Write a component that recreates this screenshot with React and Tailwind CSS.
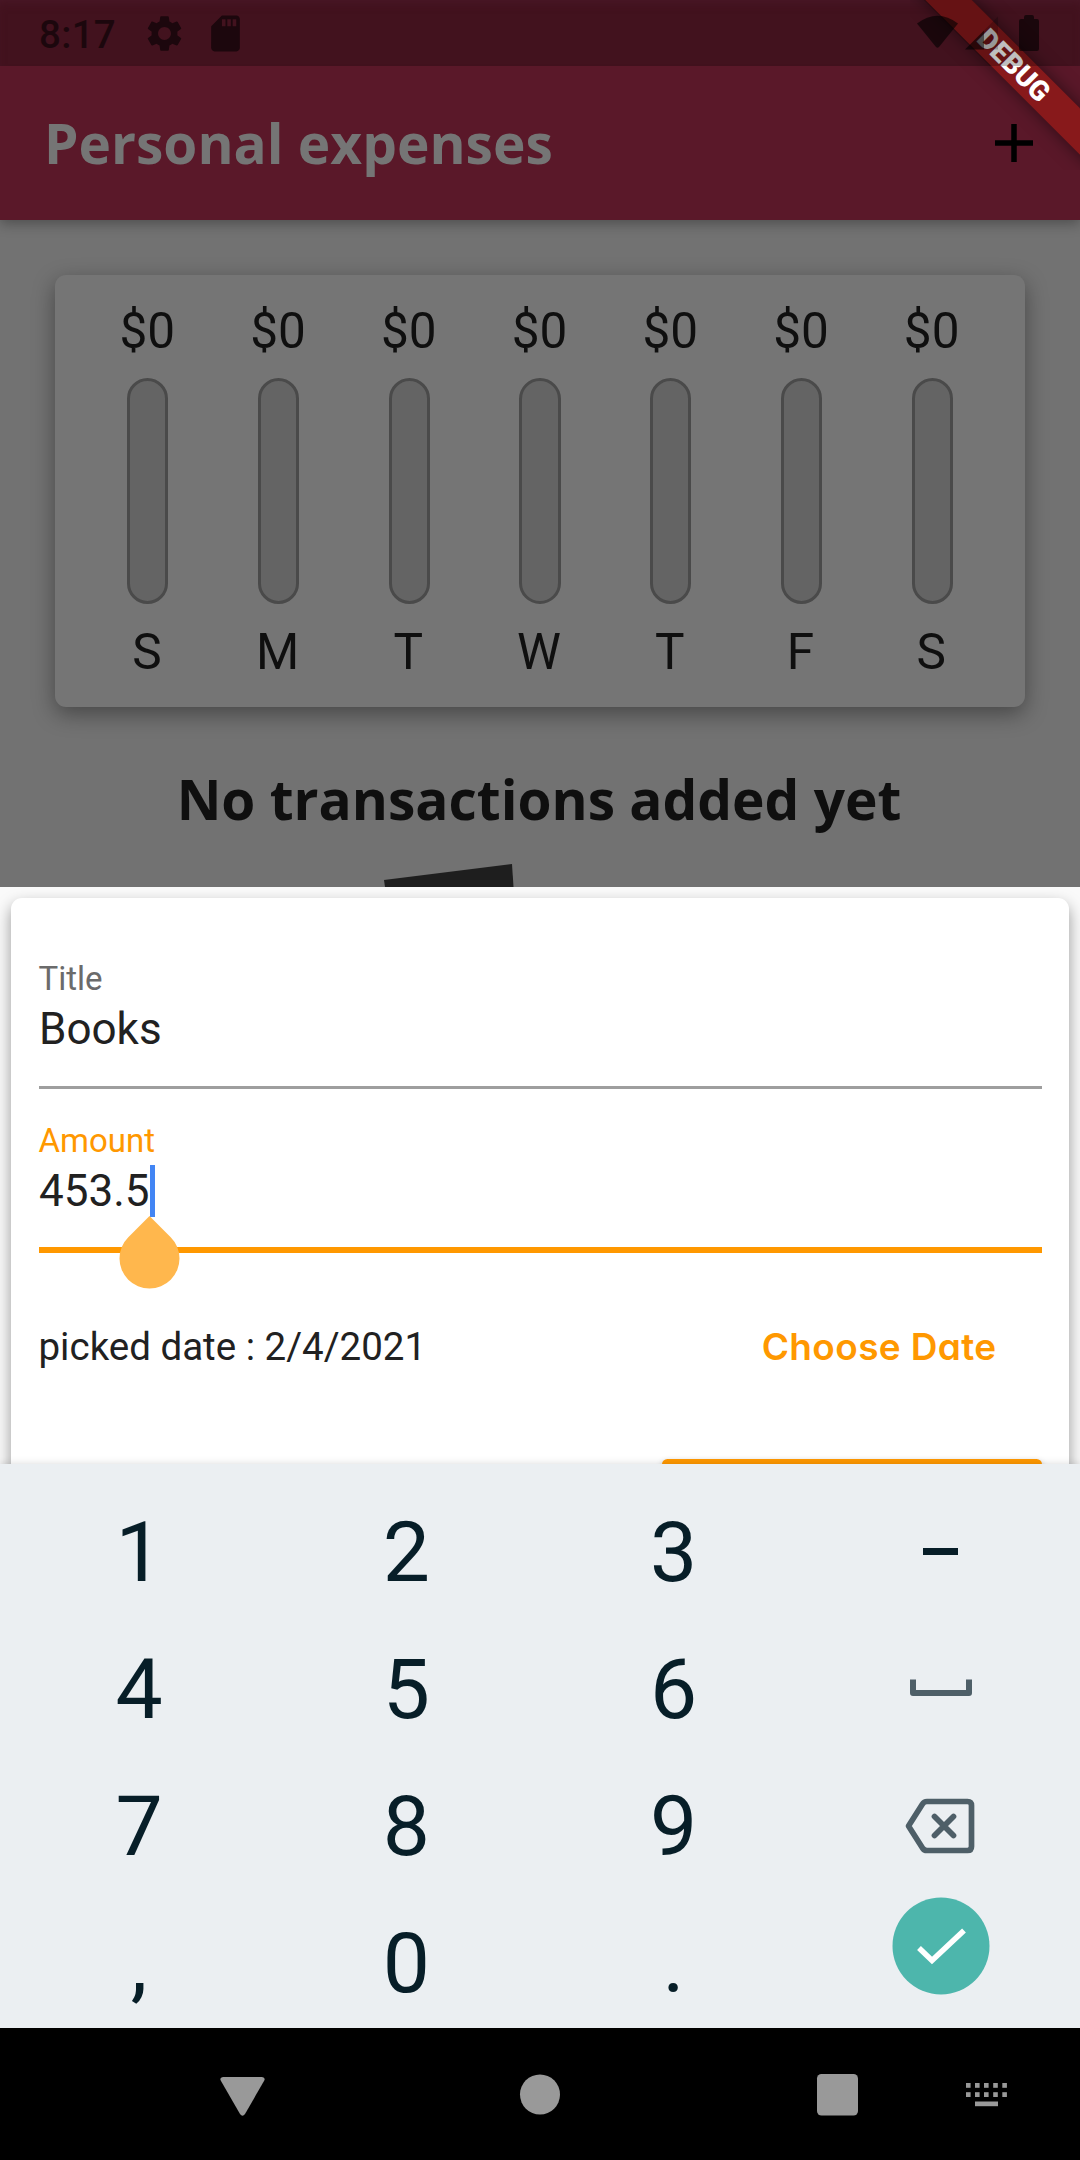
import React from 'react';
import { MdSettings, MdSdCard } from 'react-icons/md';

const DAYS = ['S', 'M', 'T', 'W', 'T', 'F', 'S'];

function StatusBar() {
  return (
    <div className="relative z-20 flex h-[66px] items-center bg-[#42121e] pl-[39px] shadow-[inset_0_6px_12px_-6px_#4c1a2a]">
      <span className="mt-[4px] w-[100px] text-[38.5px] font-medium leading-[48px] tracking-[0.3px] text-[#1c070d]">8:17</span>
      <MdSettings className="ml-[4px] size-[43px] text-[#1c070d]" />
      <MdSdCard className="ml-[18px] size-[43px] text-[#1c070d]" />
    </div>
  );
}

function StatusIndicators() {
  return (
    <svg className="absolute right-0 top-0 z-40" width="180" height="66" viewBox="900 0 180 66">
      <g fill="#000" fillOpacity="0.6">
        <path d="M917 23.5Q937.500 8 958 23.500L939 47Q937.500 48.500 936 47Z" />
        <path d="M965 49.500L984 30.500V49.500Z" />
        <path d="M1024 19V17Q1024 15 1026 15H1032Q1034 15 1034 17V19H1037Q1039 19 1039 21V49Q1039 51 1037 51H1021Q1019 51 1019 49V21Q1019 19 1021 19Z" />
      </g>
      <path d="M984 30.500L998 16.500V49.500H984Z" fill="#000" fillOpacity="0.2" />
    </svg>
  );
}

function DebugBanner() {
  return (
    <div className="pointer-events-none absolute right-0 top-0 z-30 size-[170px] overflow-hidden">
      <div className="absolute left-[-35px] top-[45px] flex h-[33px] w-[270px] rotate-45 items-center justify-center bg-[#88191b] shadow-[0_0_17px_rgba(0,0,0,0.5)]">
        <span className="ml-[11px] text-[28px] font-black leading-[33px] text-white">DEBUG</span>
      </div>
      <div className="absolute inset-x-0 top-0 h-[66px] bg-black/25 [clip-path:polygon(14px_0,62px_0,128px_66px,80px_66px)]" />
    </div>
  );
}

function AppBar() {
  return (
    <div className="relative z-10 flex h-[154px] items-center justify-between bg-[#5a1829] pl-[44px] pr-[46px] shadow-[0_4px_12px_rgba(0,0,0,0.3)]">
      <h1 className="mb-[2px] font-['Open_Sans'] text-[55px] font-bold leading-[75px] text-[#757575]">Personal expenses</h1>
      <svg width="40" height="40" viewBox="0 0 40 40">
        <path d="M20 1V39M1 20H39" stroke="#000" strokeWidth="5.5" />
      </svg>
    </div>
  );
}

function Chart() {
  return (
    <div className="mx-[55px] mt-[55px] flex h-[432px] rounded-[11px] bg-[#757575] px-[27.500px] pt-[27px] shadow-[0_7px_22px_rgba(0,0,0,0.38)]">
      {DAYS.map((day, i) => (
        <div key={i} className="flex flex-1 flex-col items-center text-[49.500px] leading-[58px] text-[#0f0f0f]">
          <span className="mr-px">$0</span>
          <div className="mb-[19px] mt-[18px] h-[226px] w-[41.250px] rounded-full border-[3px] border-[#4a4a4a] bg-[#646464]" />
          <span className="mr-[2px]">{day}</span>
        </div>
      ))}
    </div>
  );
}

function Field({ label, value, active }) {
  return (
    <div>
      <div className={active ? 'text-[33px] leading-[40px] text-[#ff9800]' : 'text-[33px] leading-[40px] text-[#6b6b6b]'}>{label}</div>
      <div className="mt-[4px] flex h-[52px] items-center pl-[0.500px] text-[44px] leading-[52px] text-[#212121]">
        <span>{value}</span>
        {active && (
          <span className="relative h-[52px] w-[5.500px] bg-[#4285f4]">
            <svg className="absolute left-[-31px] top-[51px]" width="61" height="73" viewBox="0 0 61 73">
              <path d="M30.500 0L51.700 21.200A30 30 0 1 1 9.300 21.200Z" fill="#ffb74d" />
            </svg>
          </span>
        )}
      </div>
      <div className={active ? 'mt-[30px] h-[5.500px] bg-[#ff9800]' : 'mt-[31px] h-[3px] bg-[#9e9e9e]'} />
    </div>
  );
}

function Sheet() {
  return (
    <div className="h-[577px] overflow-hidden bg-[#fafafa] px-[11px] pt-[11px]">
      <div className="h-[640px] rounded-[11px] bg-white px-[27.500px] pt-[61px] shadow-[0_7px_16px_rgba(0,0,0,0.4)]">
        <Field label="Title" value="Books" />
        <div className="h-[32px]" />
        <Field label="Amount" value="453.5" active />
        <div className="mt-[28px] flex h-[132px] items-center justify-between pr-[45px]">
          <span className="text-[38.500px] text-[#212121]">picked date : 2/4/2021</span>
          <span className="font-[Inter] text-[37px] font-semibold tracking-[0.350px] text-[#ff9800] [font-feature-settings:'cv11']">Choose Date</span>
        </div>
        <div className="ml-auto mt-[46px] h-[99px] w-[380px] rounded-[5.500px] bg-[#ff9800] shadow-[0_3px_6px_rgba(0,0,0,0.3)]" />
      </div>
    </div>
  );
}

function SpaceIcon() {
  return (
    <svg className="mb-[4px] ml-px" width="62" height="18" viewBox="0 0 62 18">
      <path d="M3 0.500V14H59V0.500" fill="none" stroke="#4e5f68" strokeWidth="6" strokeLinejoin="round" />
    </svg>
  );
}

function BackspaceIcon() {
  return (
    <svg className="mb-[3px] mr-[2px]" width="70" height="56" viewBox="0 0 70 56">
      <g fill="none" stroke="#4e5f68" strokeWidth="5.700" strokeLinejoin="round">
        <path d="M22 3.500H62.500Q66.500 3.500 66.500 7.500V48.500Q66.500 52.500 62.500 52.500H22Q19 52.500 17.500 50L3.500 28L17.500 6Q19 3.500 22 3.500Z" />
        <path d="M29.500 18.500L48.500 37.500M48.500 18.500L29.500 37.500" strokeLinecap="round" />
      </g>
    </svg>
  );
}

function DoneIcon() {
  return (
    <svg width="98" height="98" viewBox="0 0 98 98">
      <circle cx="49" cy="49" r="48.500" fill="#4db6ac" />
      <path d="M27 51L40 63.500L72 33.500" fill="none" stroke="#fff" strokeWidth="5.500" />
    </svg>
  );
}

function Keyboard() {
  const keys = [
    '1', '2', '3', '–',
    '4', '5', '6', <SpaceIcon />,
    '7', '8', '9', <BackspaceIcon />,
    ',', '0', '.', <div className="mb-[37px]"><DoneIcon /></div>,
  ];
  return (
    <div className="relative z-10 grid h-[564px] grid-cols-4 grid-rows-[repeat(4,137px)] bg-[#ebeff2] px-[5.500px] pt-[20.500px] shadow-[0_-1px_7px_rgba(0,0,0,0.12)]">
      {keys.map((key, i) => (
        <div key={i} className="flex items-center justify-center text-[84px] leading-[100px] text-[#071e28]">
          {key === '–' ? <span className="mb-[4px] h-[7px] w-[35px] bg-[#071e28]" /> : key}
        </div>
      ))}
    </div>
  );
}

function NavBar() {
  return (
    <div className="h-[132px] bg-black">
      <svg width="1080" height="132" viewBox="0 0 1080 132" fill="#999">
        <path d="M223 49H262Q266 49.500 264 53L245 86Q242.500 89.500 240 86L221 53Q219 49.500 223 49Z" />
        <circle cx="540" cy="66.500" r="20" />
        <rect x="817" y="46" width="41" height="41.500" rx="4.500" />
        {[966, 975, 984, 993.2, 1002.300].map((x) => (
          <React.Fragment key={x}>
            <rect x={x} y="55" width="4.600" height="4.800" />
            <rect x={x} y="64.200" width="4.600" height="4.800" />
          </React.Fragment>
        ))}
        <rect x="975" y="73.500" width="23" height="4.700" />
      </svg>
    </div>
  );
}

export default function App() {
  return (
    <div className="relative flex h-[2160px] w-[1080px] flex-col overflow-hidden bg-[#727272] font-[Roboto,sans-serif]">
      <StatusBar />
      <AppBar />
      <div className="flex h-[667px] flex-col overflow-hidden">
        <Chart />
        <h2 className="mr-[2px] mt-[54px] text-center font-['Open_Sans'] text-[55px] font-bold leading-[75px] text-[#0f0f0f]">
          No transactions added yet
        </h2>
        <svg className="ml-[384px] mt-[28px] shrink-0" width="131" height="23" viewBox="0 0 131 23">
          <path d="M0 16L128 0L129.500 23H1Z" fill="#1e1e1e" />
        </svg>
      </div>
      <Sheet />
      <Keyboard />
      <NavBar />
      <DebugBanner />
      <StatusIndicators />
    </div>
  );
}
